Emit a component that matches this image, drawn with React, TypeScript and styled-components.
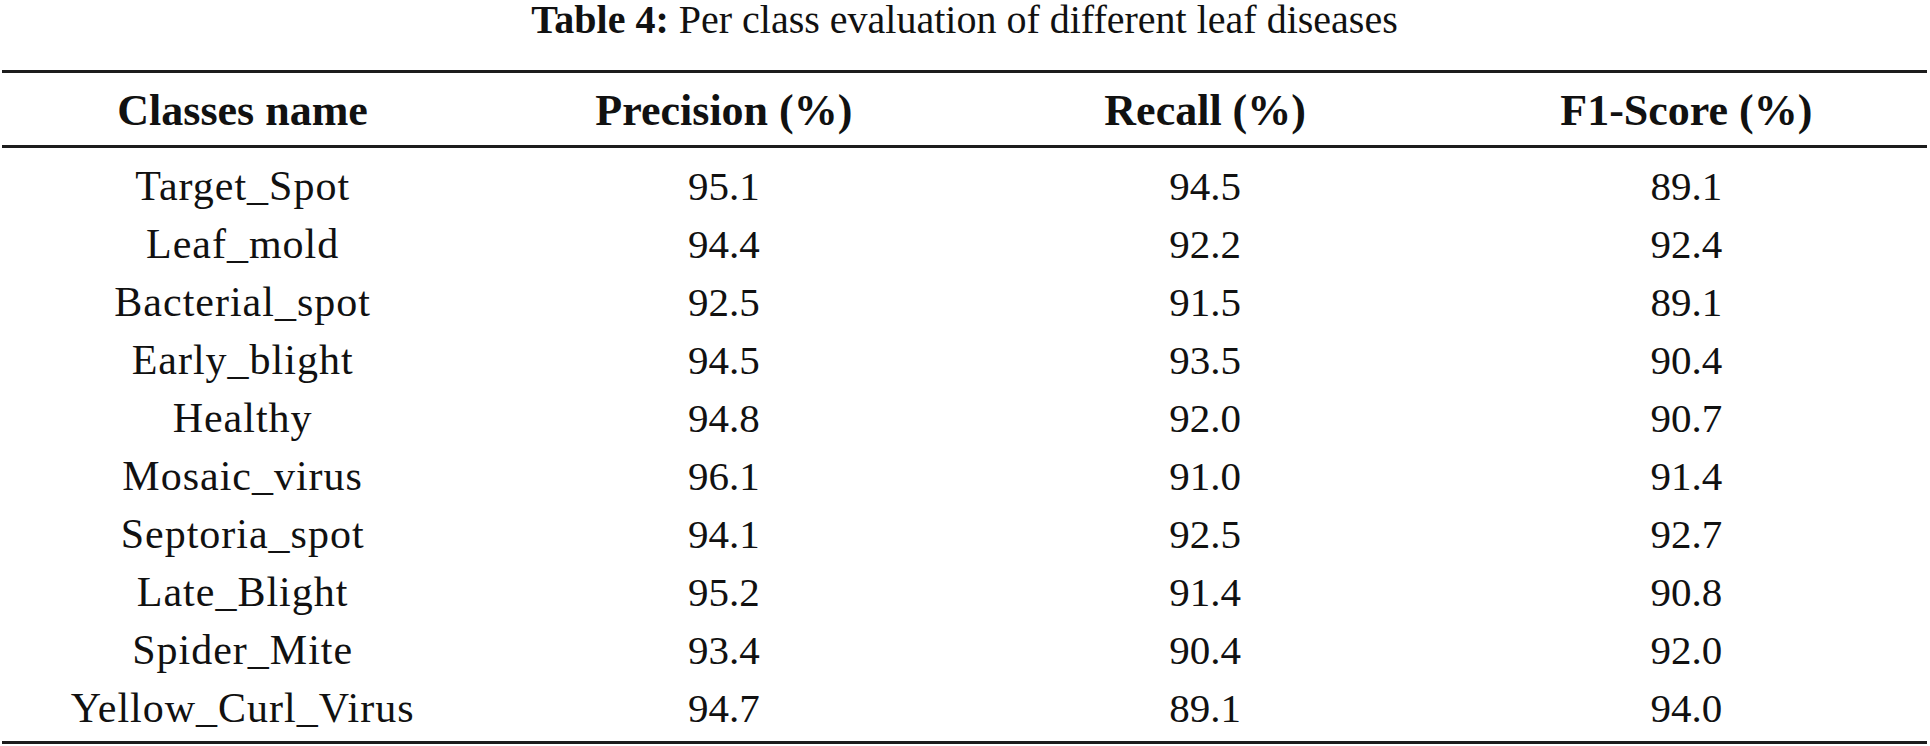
import React from 'react';
import styled, { createGlobalStyle } from 'styled-components';

const GlobalStyle = createGlobalStyle`
  html, body {
    margin: 0;
    padding: 0;
    background: #ffffff;
  }
  body {
    font-family: 'Liberation Serif', 'Times New Roman', serif;
    color: #111111;
  }
`;

const Page = styled.div`
  width: 1925px;
  margin-left: 2px;
`;

const Caption = styled.div`
  text-align: center;
  font-size: 40px;
  line-height: 40px;
  margin-bottom: 30px;

  strong {
    font-weight: 700;
  }
`;

const Table = styled.div`
  border-top: 3px solid #1d1d1d;
  border-bottom: 3px solid #1d1d1d;
`;

const HeadRow = styled.div`
  display: grid;
  grid-template-columns: repeat(4, 1fr);
  border-bottom: 3px solid #1d1d1d;
  padding-top: 4px;
  font-size: 44px;
  line-height: 68px;
  font-weight: 700;
`;

const Body = styled.div`
  padding: 9px 0 4px;
`;

const Row = styled.div`
  display: grid;
  grid-template-columns: repeat(4, 1fr);
  font-size: 41px;
  line-height: 58px;
`;

const Cell = styled.div<{ $label?: boolean }>`
  text-align: center;
  white-space: nowrap;
  font-size: ${p => (p.$label ? '42px' : 'inherit')};
  letter-spacing: ${p => (p.$label ? '1px' : 'normal')};
`;

const headers = ['Classes name', 'Precision (%)', 'Recall (%)', 'F1-Score (%)'];

const rows: [string, string, string, string][] = [
  ['Target_Spot', '95.1', '94.5', '89.1'],
  ['Leaf_mold', '94.4', '92.2', '92.4'],
  ['Bacterial_spot', '92.5', '91.5', '89.1'],
  ['Early_blight', '94.5', '93.5', '90.4'],
  ['Healthy', '94.8', '92.0', '90.7'],
  ['Mosaic_virus', '96.1', '91.0', '91.4'],
  ['Septoria_spot', '94.1', '92.5', '92.7'],
  ['Late_Blight', '95.2', '91.4', '90.8'],
  ['Spider_Mite', '93.4', '90.4', '92.0'],
  ['Yellow_Curl_Virus', '94.7', '89.1', '94.0'],
];

export default function App() {
  return (
    <>
      <GlobalStyle />
      <Page>
        <Caption>
          <strong>Table 4:</strong> Per class evaluation of different leaf diseases
        </Caption>
        <Table>
          <HeadRow>
            {headers.map(h => (
              <Cell key={h}>{h}</Cell>
            ))}
          </HeadRow>
          <Body>
            {rows.map(r => (
              <Row key={r[0]}>
                {r.map((v, i) => (
                  <Cell key={i} $label={i === 0}>
                    {v}
                  </Cell>
                ))}
              </Row>
            ))}
          </Body>
        </Table>
      </Page>
    </>
  );
}
